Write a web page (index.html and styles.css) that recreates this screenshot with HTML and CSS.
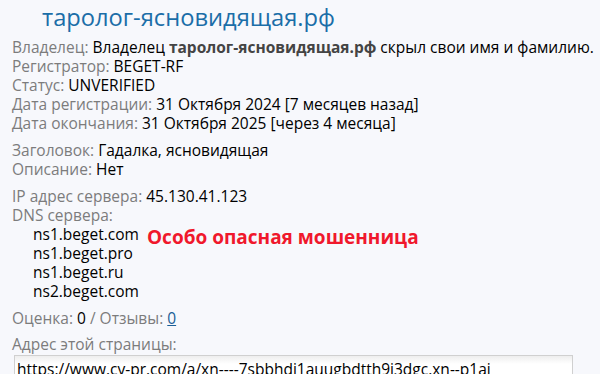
FILE: index.html
```html
<!DOCTYPE html>
<html lang="ru">
<head>
<meta charset="utf-8">
<link rel="stylesheet" href="styles.css">
</head>
<body>
<div class="page">
  <h1 class="title">таролог-ясновидящая.рф</h1>
  <div class="group first">
    <div class="row"><span class="lbl">Владелец:</span> Владелец <b class="dom">таролог-ясновидящая.рф</b> скрыл свои имя и фамилию.</div>
    <div class="row"><span class="lbl">Регистратор:</span> BEGET-RF</div>
    <div class="row"><span class="lbl">Статус:</span> UNVERIFIED</div>
    <div class="row"><span class="lbl">Дата регистрации:</span> 31 Октября 2024 [7 месяцев назад]</div>
    <div class="row"><span class="lbl">Дата окончания:</span> 31 Октября 2025 [через 4 месяца]</div>
  </div>
  <div class="group">
    <div class="row"><span class="lbl">Заголовок:</span> Гадалка, ясновидящая</div>
    <div class="row"><span class="lbl">Описание:</span> Нет</div>
  </div>
  <div class="group">
    <div class="row"><span class="lbl">IP адрес сервера:</span> 45.130.41.123</div>
    <div class="row"><span class="lbl">DNS сервера:</span></div>
    <div class="dns">
      <div class="ns-list">
        <div class="row">ns1.beget.com</div>
        <div class="row">ns1.beget.pro</div>
        <div class="row">ns1.beget.ru</div>
        <div class="row">ns2.beget.com</div>
      </div>
      <div class="warn">Особо опасная мошенница</div>
    </div>
  </div>
  <div class="group">
    <div class="row"><span class="lbl">Оценка:</span> 0 <span class="lbl">/ Отзывы:</span> <a class="link" href="#">0</a></div>
  </div>
  <div class="group last">
    <div class="row"><span class="lbl">Адрес этой страницы:</span></div>
    <div class="url">https://www.cy-pr.com/a/xn----7sbbhdi1auugbdtth9j3dgc.xn--p1ai</div>
  </div>
</div>
</body>
</html>
```
FILE: styles.css
```css
html, body {
  margin: 0;
  padding: 0;
  background: #f7f8fc;
}
body {
  font-family: "Open Sans", "Noto Sans", sans-serif;
  font-size: 15.5px;
  color: #000;
}
.page {
  padding: 0 0 0 12px;
}
.title {
  margin: 0;
  padding: 2px 0 0 30px;
  font-family: "Open Sans", "Noto Sans", sans-serif;
  font-weight: normal;
  font-size: 23.7px;
  line-height: 30px;
  color: #1b6ea8;
}
.group {
  margin-top: 8px;
}
.group.first {
  margin-top: 6px;
}
.row {
  line-height: 19px;
  white-space: nowrap;
}
.lbl {
  color: #7c7c7c;
}
.dom {
  color: #444;
}
.dns {
  display: flex;
  align-items: flex-start;
}
.ns-list {
  padding-left: 21px;
  width: 114px;
}
.warn {
  color: #f0182c;
  font-weight: bold;
  font-size: 19px;
  line-height: 24px;
  margin-top: 0;
}
.link {
  color: #1b5e96;
}
.last {
  margin-top: 7px;
}
.url {
  margin-top: 1px;
  margin-left: 2px;
  width: 559px;
  height: 26px;
  border: 1px solid #d0d0d0;
  border-bottom: none;
  background: linear-gradient(#eeeeee, #ffffff 8px);
  padding: 0 0 0 2px;
  line-height: 26px;
  box-sizing: border-box;
  white-space: nowrap;
}
```
